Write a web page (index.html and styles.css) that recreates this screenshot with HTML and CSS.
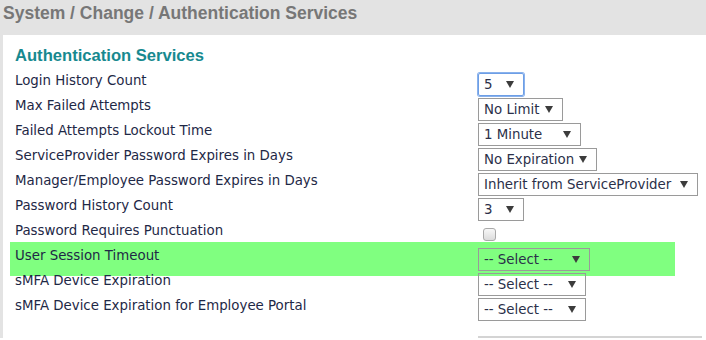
FILE: index.html
```html
<!DOCTYPE html>
<html lang="en">
<head>
    <meta charset="UTF-8">
    <title>Authentication Services</title>
    <link rel="stylesheet" href="styles.css">
</head>
<body>
<div class="page">
    <div class="page-title">System / Change / Authentication Services</div>

    <div class="panel">
        <h2 class="section-title">Authentication Services</h2>

        <div class="form-row">
            <div class="label">Login History Count</div>
            <div class="field"><div class="select w-46 focused"><span>5</span><i class="arrow"></i></div></div>
        </div>
        <div class="form-row">
            <div class="label">Max Failed Attempts</div>
            <div class="field"><div class="select w-85"><span>No Limit</span><i class="arrow"></i></div></div>
        </div>
        <div class="form-row">
            <div class="label">Failed Attempts Lockout Time</div>
            <div class="field"><div class="select w-103"><span>1 Minute</span><i class="arrow"></i></div></div>
        </div>
        <div class="form-row">
            <div class="label">ServiceProvider Password Expires in Days</div>
            <div class="field"><div class="select w-119"><span>No Expiration</span><i class="arrow"></i></div></div>
        </div>
        <div class="form-row">
            <div class="label">Manager/Employee Password Expires in Days</div>
            <div class="field"><div class="select w-220"><span>Inherit from ServiceProvider</span><i class="arrow"></i></div></div>
        </div>
        <div class="form-row">
            <div class="label">Password History Count</div>
            <div class="field"><div class="select w-46"><span>3</span><i class="arrow"></i></div></div>
        </div>
        <div class="form-row">
            <div class="label">Password Requires Punctuation</div>
            <div class="field"><span class="checkbox"></span></div>
        </div>
        <!-- highlighted row -->
        <div class="form-row highlight">
            <div class="label">User Session Timeout</div>
            <div class="field"><div class="select w-112"><span>-- Select --</span><i class="arrow"></i></div></div>
        </div>
        <div class="form-row">
            <div class="label">sMFA Device Expiration</div>
            <div class="field"><div class="select w-108"><span>-- Select --</span><i class="arrow"></i></div></div>
        </div>
        <div class="form-row">
            <div class="label">sMFA Device Expiration for Employee Portal</div>
            <div class="field"><div class="select w-108"><span>-- Select --</span><i class="arrow"></i></div></div>
        </div>

        <div class="form-row next-row">
            <div class="label"></div>
            <div class="field"><div class="next-box"></div></div>
        </div>
    </div>
</div>
</body>
</html>
```

FILE: styles.css
```css
body {
    margin: 0;
    background-color: #fff;
    font-family: "DejaVu Sans", Verdana, sans-serif;
    font-size: 13.35px;
    color: #1e2846;
}

.page {
    background-color: #e3e3e3;
}

.page-title {
    height: 35px;
    padding-left: 3px;
    font-family: "Liberation Sans", Arial, sans-serif;
    font-weight: bold;
    font-size: 17.5px;
    line-height: 26px;
    color: #777;
}

.panel {
    margin-left: 3px;
    padding-top: 10px;
    background-color: #fff;
}

.section-title {
    margin: 0 0 6px 12px;
    font-family: "Liberation Sans", Arial, sans-serif;
    font-size: 16.6px;
    line-height: 21px;
    color: #17898f;
}

/* label + control rows */
.form-row {
    display: grid;
    grid-template-columns: 463px auto;
    align-items: center;
    width: 665px;
    height: 25px;
    margin-left: 7px;
    padding-left: 5px;
    box-sizing: border-box;
}

.label {
    align-self: start;
    margin-top: 1px;
    line-height: 16px;
    white-space: nowrap;
}

.field {
    display: flex;
    align-items: center;
}

.highlight {
    height: 34px;
    margin-top: -5px;
    margin-bottom: -4px;
    padding-top: 5px;
    padding-bottom: 4px;
    background-color: #80ff80;
}

.select {
    display: flex;
    align-items: center;
    justify-content: space-between;
    height: 23px;
    padding: 0 9px 0 5px;
    box-sizing: border-box;
    border: 1px solid #9a9a9a;
    color: #2b3049;
    white-space: nowrap;
}

.select.focused {
    border-color: #6d9ee6;
    border-radius: 2px;
    box-shadow: 0 0 0 1px #8ab2ec;
}

.arrow {
    width: 0;
    height: 0;
    border-top: 7px solid #3c3c3c;
    border-left: 4px solid transparent;
    border-right: 4px solid transparent;
}

.w-46 { width: 46px; }
.w-85 { width: 85px; }
.w-103 { width: 103px; }
.w-119 { width: 119px; }
.w-220 { width: 220px; }
.w-112 { width: 112px; }
.w-108 { width: 108px; }

.checkbox {
    width: 13px;
    height: 13px;
    margin-left: 5px;
    box-sizing: border-box;
    border: 1px solid #a9a9a9;
    border-radius: 3px;
    background: linear-gradient(#f7f7f7, #dcdcdc);
}

.next-row {
    height: 16px;
    align-items: end;
}

.next-box {
    width: 224px;
    height: 0;
    border-top: 2px solid #d4d4d4;
}
```
